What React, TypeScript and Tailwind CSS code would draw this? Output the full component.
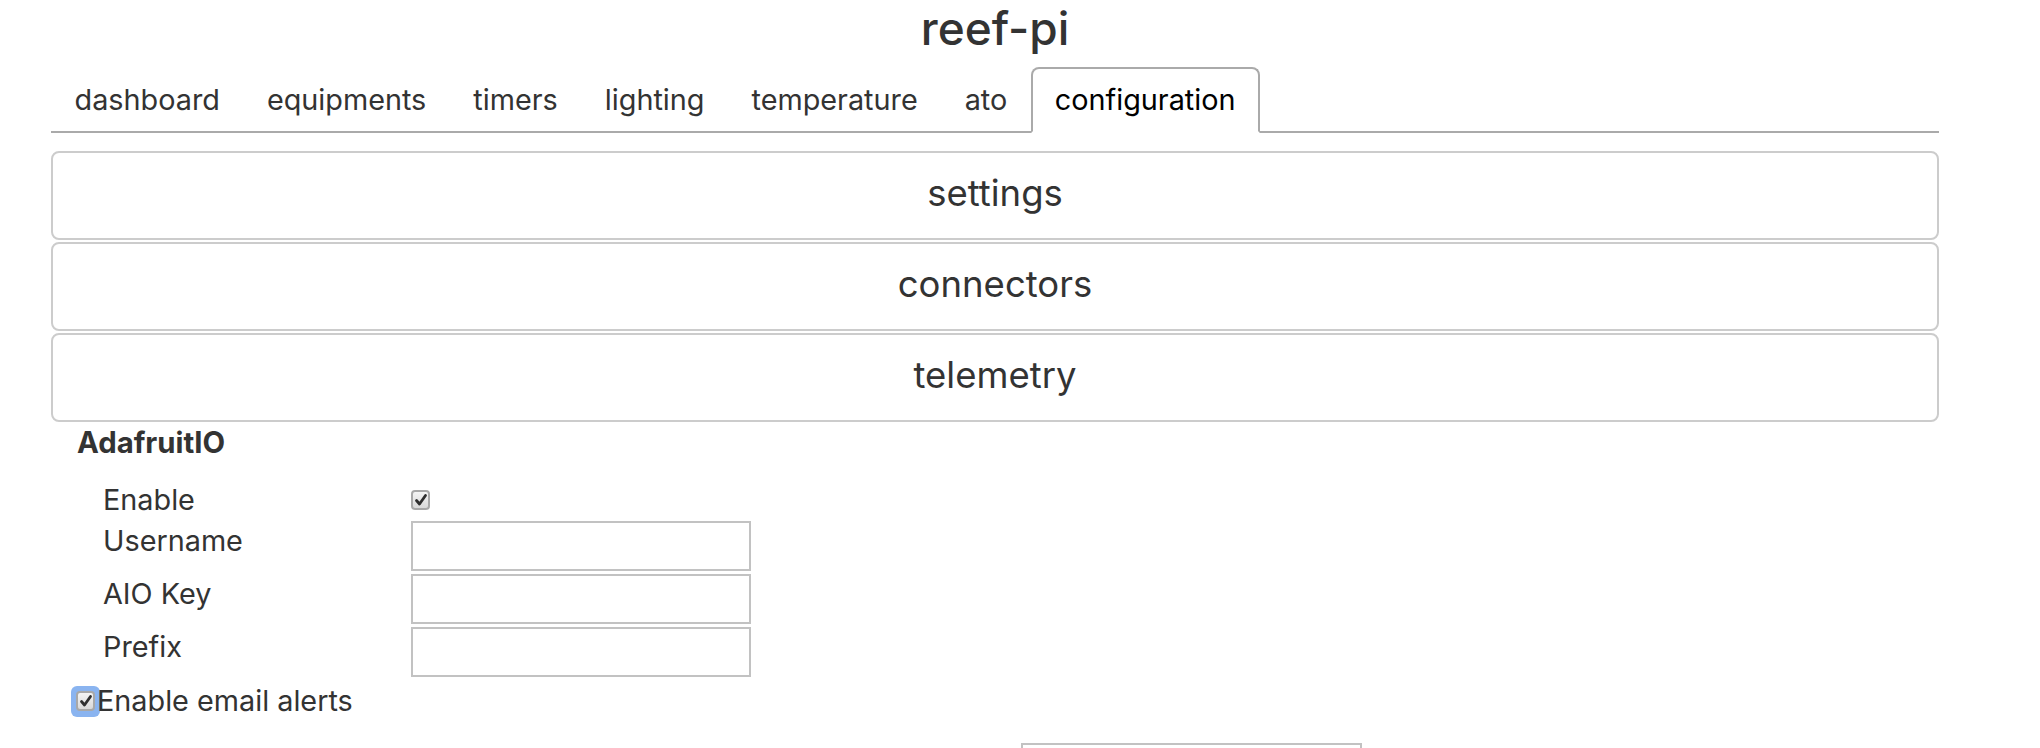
import React from "react";

const tabs = [
  "dashboard",
  "equipments",
  "timers",
  "lighting",
  "temperature",
  "ato",
  "configuration",
];

const panels = ["settings", "connectors", "telemetry"];

const Checkbox = ({ focused = false }: { focused?: boolean }) => (
  <span
    className={
      focused
        ? "-mr-[3px] flex h-[31px] w-[29px] items-center justify-center rounded-[6px] bg-[#8ab4f0]"
        : "flex"
    }
  >
    <span className="flex h-[20px] w-[19px] items-center justify-center rounded-[4px] border-2 border-[#a8a8a8] bg-gradient-to-b from-[#f4f4f4] to-[#d9d9d9]">
      <svg width="14" height="14" viewBox="0 0 14 14">
        <path
          d="M2.5 7.5 L5.5 11 L11.5 2.5"
          fill="none"
          stroke="#2f2f2f"
          strokeWidth="2.8"
          strokeLinecap="round"
          strokeLinejoin="round"
        />
      </svg>
    </span>
  </span>
);

const TextField = () => (
  <div className="h-[50px] w-[340px] border-2 border-[#c2c2c2] bg-white" />
);

export default function App() {
  return (
    <div
      className="h-[748px] overflow-hidden bg-white text-[#333]"
      style={{ fontFamily: 'Inter, "Liberation Sans", sans-serif' }}
    >
      <div className="ml-[51px] w-[1888px]">
        <h1 className="text-center text-[46px] font-medium leading-[56px] text-[#333]">
          reef-pi
        </h1>

        <ul className="mt-[11px] flex border-b-2 border-[#aaa]">
          {tabs.map((t) => {
            const active = t === "configuration";
            return (
              <li
                key={t}
                className={
                  active
                    ? "-mb-[2px] rounded-t-[8px] border-2 border-[#aaa] border-b-white bg-white px-[22px] pt-[13px] pb-[13px] text-[28.8px] leading-[36px] text-black"
                    : "-mb-[2px] rounded-t-[8px] border-2 border-transparent px-[21.5px] pt-[13px] pb-[13px] text-[28.8px] leading-[36px] text-[#333]"
                }
              >
                {t}
              </li>
            );
          })}
        </ul>

        <div className="mt-[18px] flex flex-col gap-[2px]">
          {panels.map((p) => (
            <div
              key={p}
              className="flex h-[89px] items-center justify-center rounded-[8px] border-2 border-[#cccccc] pb-[4px] text-[36.5px] text-[#333]"
            >
              {p}
            </div>
          ))}
        </div>

        <div className="mt-[4px] pl-[26px] text-[29.3px] font-bold leading-[34px] text-[#333]">
          AdafruitIO
        </div>

        <div className="mt-[22px] grid grid-cols-[360px_340px] gap-y-[3px] text-[28.8px] leading-[36px] text-[#333]">
          <div className="pl-[52px]">Enable</div>
          <div className="flex h-[36px] items-center">
            <Checkbox />
          </div>

          <div className="flex items-center pb-[10px] pl-[52px]">Username</div>
          <TextField />

          <div className="flex items-center pb-[10px] pl-[52px]">AIO Key</div>
          <TextField />

          <div className="flex items-center pb-[10px] pl-[52px]">Prefix</div>
          <TextField />
        </div>

        <div className="mt-[6px] flex items-center pl-[20px] text-[28.8px] leading-[36px] text-[#333]">
          <Checkbox focused />
          <span>Enable email alerts</span>
        </div>

        <div className="mt-[24px] pl-[970px]">
          <div className="h-[50px] w-[341px] border-2 border-[#c2c2c2] bg-white" />
        </div>
      </div>
    </div>
  );
}
